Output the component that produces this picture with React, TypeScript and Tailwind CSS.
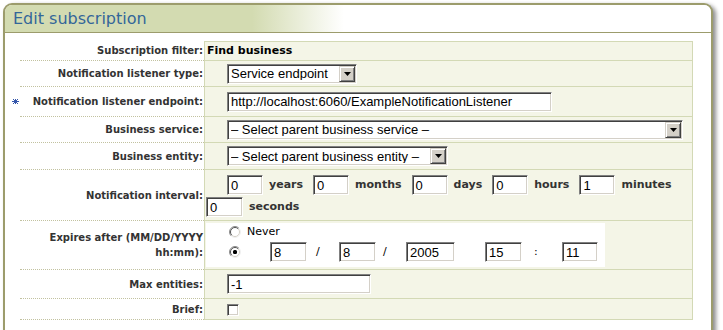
import React from 'react';

// Windows-classic sunken field
const sunken =
  'border border-t-[#808080] border-l-[#808080] border-b-white border-r-white shadow-[inset_1px_1px_0_#404040,inset_-1px_-1px_0_#d4d0c8] bg-white';
const fieldText = "text-[13px] text-black font-['Liberation_Sans',Arial,sans-serif] leading-none whitespace-nowrap";
const labelFont = "font-['DejaVu_Sans',Verdana,sans-serif]";

const TextBox = ({ value, className }: { value: string; className: string }) => (
  <div className={`${sunken} ${fieldText} h-[20px] flex items-center pl-[3px] overflow-hidden shrink-0 ${className}`}>
    {value}
  </div>
);

const DropButton = () => (
  <div className="w-[16px] h-[16px] mr-[1px] shrink-0 bg-[#d4d0c8] border border-t-[#d4d0c8] border-l-[#d4d0c8] border-b-[#404040] border-r-[#404040] shadow-[inset_1px_1px_0_#ffffff,inset_-1px_-1px_0_#808080] flex items-center justify-center">
    <svg width="7" height="4" viewBox="0 0 7 4">
      <path d="M0 0h7L3.5 4z" fill="#000" />
    </svg>
  </div>
);

const Select = ({ value, className }: { value: string; className: string }) => (
  <div className={`${sunken} ${fieldText} h-[20px] flex items-center pl-[3px] ${className}`}>
    <span className="flex-1 overflow-hidden">{value}</span>
    <DropButton />
  </div>
);

const Radio = ({ checked }: { checked?: boolean }) => (
  <svg width="12" height="12" viewBox="0 0 12 12" className="shrink-0">
    <circle cx="6" cy="6" r="5.5" fill="#fff" />
    <path d="M2.11 9.89A5.5 5.5 0 0 1 9.89 2.11" fill="none" stroke="#8a8a8a" />
    <path d="M9.89 2.11A5.5 5.5 0 0 1 2.11 9.89" fill="none" stroke="#f0f0f0" />
    <path d="M2.8 9.2A4.5 4.5 0 0 1 9.2 2.8" fill="none" stroke="#505050" />
    <path d="M9.2 2.8A4.5 4.5 0 0 1 2.8 9.2" fill="none" stroke="#d4d0c8" />
    {checked && <rect x="4" y="4" width="4" height="4" rx="1.5" fill="#000" />}
  </svg>
);

const RequiredMark = () => (
  <svg width="7" height="5" viewBox="0 0 7 5" className="mr-[14px] shrink-0">
    <g fill="#3355aa">
      <rect x="1" y="0" width="1" height="1" />
      <rect x="3" y="0" width="1" height="1" />
      <rect x="5" y="0" width="1" height="1" />
      <rect x="2" y="1" width="3" height="1" />
      <rect x="0" y="2" width="7" height="1" />
      <rect x="2" y="3" width="3" height="1" />
      <rect x="1" y="4" width="1" height="1" />
      <rect x="3" y="4" width="1" height="1" />
      <rect x="5" y="4" width="1" height="1" />
    </g>
  </svg>
);

const Row = ({
  label,
  h,
  first,
  valueClass,
  children,
}: {
  label: React.ReactNode;
  h: string;
  first?: boolean;
  valueClass: string;
  children: React.ReactNode;
}) => (
  <div className={`flex ${h}`}>
    <div
      className={`w-[184px] shrink-0 border-b border-dotted border-[#c2c2a0] flex items-center justify-end pr-[1px] text-[10px] font-bold text-[#333333] whitespace-nowrap ${labelFont}`}
    >
      {label}
    </div>
    <div
      className={`w-[489px] shrink-0 bg-[#f4f5e7] border-x border-b border-[#d3d9b5] ${first ? 'border-t' : ''} ${valueClass}`}
    >
      {children}
    </div>
  </div>
);

const Unit = ({ text }: { text: string }) => (
  <span className={`ml-[6px] mr-[10px] text-[11px] font-bold text-[#333333] ${labelFont}`}>{text}</span>
);

export default function App() {
  const interval = [
    ['0', 'years'],
    ['0', 'months'],
    ['0', 'days'],
    ['0', 'hours'],
    ['1', 'minutes'],
  ];

  return (
    <div className="w-[723px] h-[330px] bg-white overflow-hidden pt-[3px] pl-[3px]">
      <div className="w-[710px] h-[360px] border-2 border-b-0 border-[#9c9c6c] rounded-t-[9px] shadow-[3px_2px_4px_rgba(0,0,0,0.45)] bg-white overflow-hidden">
        {/* header */}
        <div className="h-[28px] border-b border-[#9c9c6c] bg-[linear-gradient(to_right,#d3dbb1_35%,#ffffff_48%)] pl-[8px] pt-[6px]">
          <h2 className={`text-[16px] text-[#336699] leading-none ${labelFont}`}>Edit subscription</h2>
        </div>

        {/* form */}
        <div className="pt-[8px] pl-[15px]">
          <Row label="Subscription filter:" h="h-[20px]" first valueClass="flex items-center pl-[2px]">
            <span className={`text-[11px] font-bold text-black ${labelFont}`}>Find business</span>
          </Row>

          <Row label="Notification listener type:" h="h-[26px]" valueClass="flex items-center pl-[22px]">
            <Select value="Service endpoint" className="w-[130px]" />
          </Row>

          <Row
            label={
              <>
                <RequiredMark />
                Notification listener endpoint:
              </>
            }
            h="h-[30px]"
            valueClass="flex items-center pl-[22px]"
          >
            <TextBox value="http://localhost:6060/ExampleNotificationListener" className="w-[325px]" />
          </Row>

          <Row label="Business service:" h="h-[26px]" valueClass="flex items-center pl-[22px]">
            <Select value="– Select parent business service –" className="w-[456px]" />
          </Row>

          <Row label="Business entity:" h="h-[27px]" valueClass="flex items-center pl-[22px]">
            <Select value="– Select parent business entity –" className="w-[221px]" />
          </Row>

          <Row label="Notification interval:" h="h-[51px]" valueClass="flex flex-col pt-[5px] gap-[2px]">
            <div className="flex items-center pl-[22px]">
              {interval.map(([v, u]) => (
                <React.Fragment key={u}>
                  <TextBox value={v} className="w-[36px]" />
                  <Unit text={u} />
                </React.Fragment>
              ))}
            </div>
            <div className="flex items-center pl-[1px]">
              <TextBox value="0" className="w-[37px]" />
              <Unit text="seconds" />
            </div>
          </Row>

          <Row
            label={
              <div className="text-right leading-[15px]">
                Expires after (MM/DD/YYYY
                <br />
                hh:mm):
              </div>
            }
            h="h-[49px]"
            valueClass="pt-[2px] pl-[1px]"
          >
            <div className={`w-[399px] h-[44px] bg-white pt-[1px] text-[11px] text-black ${labelFont}`}>
              <div className="h-[16px] flex items-center pl-[23px]">
                <Radio />
                <span className="ml-[6px]">Never</span>
              </div>
              <div className="h-[22px] mt-[1px] flex items-center pl-[23px]">
                <Radio checked />
                <TextBox value="8" className="w-[37px] ml-[29px]" />
                <span className="w-[32px] pl-[9px]">/</span>
                <TextBox value="8" className="w-[37px]" />
                <span className="w-[30px] pl-[7px]">/</span>
                <TextBox value="2005" className="w-[49px]" />
                <span className="w-[30px]" />
                <TextBox value="15" className="w-[37px]" />
                <span className="w-[40px] pl-[12px]">:</span>
                <TextBox value="11" className="w-[36px]" />
              </div>
            </div>
          </Row>

          <Row label="Max entities:" h="h-[29px]" valueClass="flex items-center pl-[22px]">
            <TextBox value="-1" className="w-[144px]" />
          </Row>

          <Row label="Brief:" h="h-[21px]" valueClass="flex items-start pt-[5px] pl-[22px]">
            <div className={`${sunken} w-[12px] h-[12px]`} />
          </Row>
        </div>
      </div>
    </div>
  );
}
